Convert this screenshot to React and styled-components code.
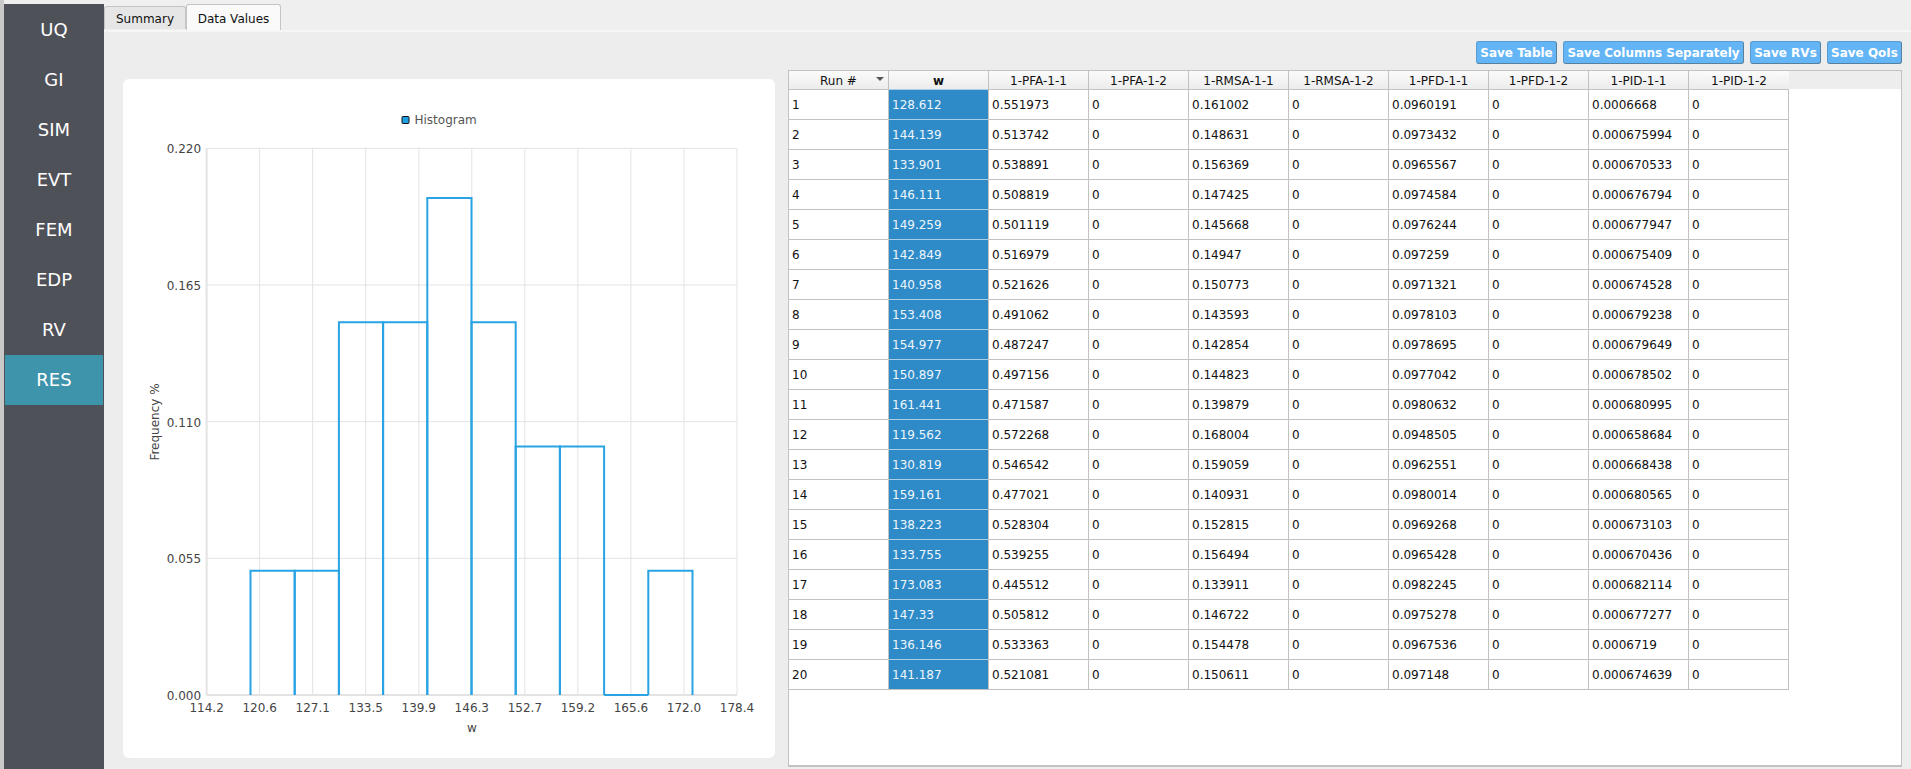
import React from 'react'
import styled, { createGlobalStyle } from 'styled-components'

const FONT = `'DejaVu Sans', 'Liberation Sans', sans-serif`

const GlobalStyle = createGlobalStyle`
  html, body {
    margin: 0;
    padding: 0;
    height: 100%;
    overflow: hidden;
    background: #efefef;
    font-family: ${FONT};
  }
`

const Window = styled.div`
  display: flex;
  width: 1911px;
  height: 769px;
  overflow: hidden;
  background: #efefef;
`
const LeftEdge = styled.div`
  width: 4px;
  background: #c9c9c9;
`
const Sidebar = styled.nav`
  display: flex;
  flex-direction: column;
  box-sizing: border-box;
  width: 100px;
  margin-top: 4px;
  padding: 1px 1px 0;
  background: #4f5159;
`
const SideItem = styled.div`
  display: flex;
  align-items: center;
  justify-content: center;
  box-sizing: border-box;
  height: 50px;
  padding-bottom: 2px;
  font-size: 18px;
  color: #fff;
  background: ${props => (props.$active ? '#3e94ab' : 'transparent')};
`
const Main = styled.div`
  display: flex;
  flex-direction: column;
  flex: 1;
  min-width: 0;
`
const TabBar = styled.div`
  display: flex;
  align-items: flex-end;
  height: 30px;
  border-bottom: 2px solid #f6f6f6;
`
const Tab = styled.div`
  display: flex;
  align-items: center;
  justify-content: center;
  box-sizing: border-box;
  width: ${props => props.$width}px;
  height: ${props => (props.$active ? 26 : 23)}px;
  margin-bottom: ${props => (props.$active ? 0 : 1)}px;
  padding-top: 2px;
  font-size: 12px;
  color: #111;
  background: ${props => (props.$active ? '#fafafa' : '#e6e6e6')};
  border: 1px solid #c4c4c4;
  border-bottom: none;
  border-radius: 3px 3px 0 0;
`
const Pane = styled.div`
  display: flex;
  flex: 1;
  gap: 13px;
  min-height: 0;
  padding: 9px 9px 2px 19px;
  background: #ededed;
`
const ChartCard = styled.div`
  width: 652px;
  height: 679px;
  margin-top: 38px;
  background: #fff;
  border-radius: 6px;
`
const RightColumn = styled.div`
  display: flex;
  flex-direction: column;
  flex: 1;
  min-width: 0;
  gap: 6px;
`
const ButtonRow = styled.div`
  display: flex;
  justify-content: flex-end;
  gap: 6px;
`
const SaveButton = styled.button`
  box-sizing: border-box;
  width: ${props => props.$width}px;
  height: 23px;
  padding: 0;
  font-family: ${FONT};
  font-size: 12px;
  font-weight: 700;
  color: #fff;
  background: #64b5f6;
  border: 1px solid #5a9ccf;
  border-bottom-color: #56809f;
  border-right-color: #56809f;
  border-radius: 3px;
`
const TablePanel = styled.div`
  flex: 1;
  min-height: 0;
  box-sizing: border-box;
  background: #fff;
  border: 1px solid #c2c2c2;
  border-bottom-width: 2px;
`
const HeaderRow = styled.div`
  display: flex;
  height: 18px;
  background: #ededed;
`
const HeaderCell = styled.div`
  position: relative;
  display: flex;
  align-items: center;
  justify-content: center;
  box-sizing: border-box;
  width: 100px;
  height: 18px;
  padding-top: 1px;
  font-size: 12px;
  font-weight: ${props => (props.$bold ? 700 : 400)};
  color: #111;
  background: linear-gradient(#fbfbfb, #ececec);
  border-right: 1px solid #c2c2c2;
  &:last-child {
    border-right: none;
  }
`
const SortArrow = styled.span`
  position: absolute;
  top: 6px;
  right: 4px;
  width: 0;
  height: 0;
  border-left: 4px solid transparent;
  border-right: 4px solid transparent;
  border-top: 4px solid #555;
`
const Row = styled.div`
  display: flex;
  height: 30px;
`
const Cell = styled.div`
  display: flex;
  align-items: center;
  box-sizing: border-box;
  width: 100px;
  height: 30px;
  padding-left: 3px;
  font-size: 12px;
  color: ${props => (props.$selected ? '#eef6fb' : '#111')};
  background: ${props => (props.$selected ? '#2e8bc8' : '#fff')};
  border-top: 1px solid ${props => (props.$selected ? '#a9cfe6' : '#c2c2c2')};
  border-right: 1px solid #c2c2c2;
  ${Row}:last-child & {
    height: 31px;
    border-bottom: 1px solid #c2c2c2;
  }
`

const SIDE_ITEMS = ['UQ', 'GI', 'SIM', 'EVT', 'FEM', 'EDP', 'RV', 'RES']

const BUTTONS = [
  { label: 'Save Table', width: 81 },
  { label: 'Save Columns Separately', width: 181 },
  { label: 'Save RVs', width: 71 },
  { label: 'Save QoIs', width: 75 }
]

const COLUMNS = [
  'Run #', 'w', '1-PFA-1-1', '1-PFA-1-2', '1-RMSA-1-1', '1-RMSA-1-2',
  '1-PFD-1-1', '1-PFD-1-2', '1-PID-1-1', '1-PID-1-2'
]

const ROWS = [
  ['128.612', '0.551973', '0.161002', '0.0960191', '0.0006668'],
  ['144.139', '0.513742', '0.148631', '0.0973432', '0.000675994'],
  ['133.901', '0.538891', '0.156369', '0.0965567', '0.000670533'],
  ['146.111', '0.508819', '0.147425', '0.0974584', '0.000676794'],
  ['149.259', '0.501119', '0.145668', '0.0976244', '0.000677947'],
  ['142.849', '0.516979', '0.14947', '0.097259', '0.000675409'],
  ['140.958', '0.521626', '0.150773', '0.0971321', '0.000674528'],
  ['153.408', '0.491062', '0.143593', '0.0978103', '0.000679238'],
  ['154.977', '0.487247', '0.142854', '0.0978695', '0.000679649'],
  ['150.897', '0.497156', '0.144823', '0.0977042', '0.000678502'],
  ['161.441', '0.471587', '0.139879', '0.0980632', '0.000680995'],
  ['119.562', '0.572268', '0.168004', '0.0948505', '0.000658684'],
  ['130.819', '0.546542', '0.159059', '0.0962551', '0.000668438'],
  ['159.161', '0.477021', '0.140931', '0.0980014', '0.000680565'],
  ['138.223', '0.528304', '0.152815', '0.0969268', '0.000673103'],
  ['133.755', '0.539255', '0.156494', '0.0965428', '0.000670436'],
  ['173.083', '0.445512', '0.133911', '0.0982245', '0.000682114'],
  ['147.33', '0.505812', '0.146722', '0.0975278', '0.000677277'],
  ['136.146', '0.533363', '0.154478', '0.0967536', '0.0006719'],
  ['141.187', '0.521081', '0.150611', '0.097148', '0.000674639']
]

// plot area, in the card's own coordinates
const PLOT = { left: 83.6, right: 614, top: 69.3, bottom: 616 }
const X_TICKS = ['114.2', '120.6', '127.1', '133.5', '139.9', '146.3', '152.7', '159.2', '165.6', '172.0', '178.4']
const Y_TICKS = ['0.000', '0.055', '0.110', '0.165', '0.220']
const BAR_START = 127.5
const BAR_STEP = 44.2
const BARS = [0.05, 0.05, 0.15, 0.15, 0.2, 0.15, 0.1, 0.1, 0, 0.05]

const valueY = v => PLOT.bottom - (v / 0.22) * (PLOT.bottom - PLOT.top)

// bars stay open at the base, only an empty bin leaves a line on the axis
const barPath = (v, i) => {
  const x = BAR_START + i * BAR_STEP
  const y = valueY(v)
  return `M${x} ${PLOT.bottom}L${x} ${y}L${x + BAR_STEP} ${y}L${x + BAR_STEP} ${PLOT.bottom}`
}

const Histogram = () => {
  const stepX = (PLOT.right - PLOT.left) / 10
  const stepY = (PLOT.bottom - PLOT.top) / 4
  return (
    <svg width='652' height='679' fontFamily={FONT} fontSize='12' fill='#444'>
      {X_TICKS.map((t, i) => (
        <line
          key={t}
          x1={PLOT.left + i * stepX}
          x2={PLOT.left + i * stepX}
          y1={PLOT.top}
          y2={PLOT.bottom}
          stroke='#e3e3e3'
          strokeWidth={i === 0 ? 2 : 1}
        />
      ))}
      {Y_TICKS.map((t, i) => (
        <line
          key={t}
          x1={PLOT.left}
          x2={PLOT.right}
          y1={PLOT.bottom - i * stepY}
          y2={PLOT.bottom - i * stepY}
          stroke='#e3e3e3'
          strokeWidth={i === 0 ? 2 : 1}
        />
      ))}
      {BARS.map((v, i) => (
        <path key={i} d={barPath(v, i)} fill='none' stroke='#29a3e4' strokeWidth='2' />
      ))}
      {X_TICKS.map((t, i) => (
        <text key={t} x={PLOT.left + i * stepX} y={633} textAnchor='middle'>{t}</text>
      ))}
      {Y_TICKS.map((t, i) => (
        <text key={t} x={PLOT.left - 5.5} y={PLOT.bottom - i * stepY + 5} textAnchor='end'>{t}</text>
      ))}
      <text x={349} y={653} textAnchor='middle'>w</text>
      <text transform='translate(36 343) rotate(-90)' textAnchor='middle'>Frequency %</text>
      <rect x='279' y='37.5' width='7' height='7' rx='1' fill='#20a0e0' stroke='#111' strokeWidth='1' />
      <text x='291.5' y='45' fill='#555'>Histogram</text>
    </svg>
  )
}

const App = () => (
  <Window>
    <GlobalStyle />
    <LeftEdge />
    <Sidebar>
      {SIDE_ITEMS.map(item => (
        <SideItem key={item} $active={item === 'RES'}>{item}</SideItem>
      ))}
    </Sidebar>
    <Main>
      <TabBar>
        <Tab $width={82}>Summary</Tab>
        <Tab $width={95} $active>Data Values</Tab>
      </TabBar>
      <Pane>
        <ChartCard>
          <Histogram />
        </ChartCard>
        <RightColumn>
          <ButtonRow>
            {BUTTONS.map(b => (
              <SaveButton key={b.label} $width={b.width}>{b.label}</SaveButton>
            ))}
          </ButtonRow>
          <TablePanel>
            <HeaderRow>
              {COLUMNS.map((c, i) => (
                <HeaderCell key={c} $bold={i === 1}>
                  {c}
                  {i === 0 && <SortArrow />}
                </HeaderCell>
              ))}
            </HeaderRow>
            {ROWS.map((r, i) => (
              <Row key={i}>
                <Cell>{i + 1}</Cell>
                <Cell $selected>{r[0]}</Cell>
                <Cell>{r[1]}</Cell>
                <Cell>0</Cell>
                <Cell>{r[2]}</Cell>
                <Cell>0</Cell>
                <Cell>{r[3]}</Cell>
                <Cell>0</Cell>
                <Cell>{r[4]}</Cell>
                <Cell>0</Cell>
              </Row>
            ))}
          </TablePanel>
        </RightColumn>
      </Pane>
    </Main>
  </Window>
)

export default App
